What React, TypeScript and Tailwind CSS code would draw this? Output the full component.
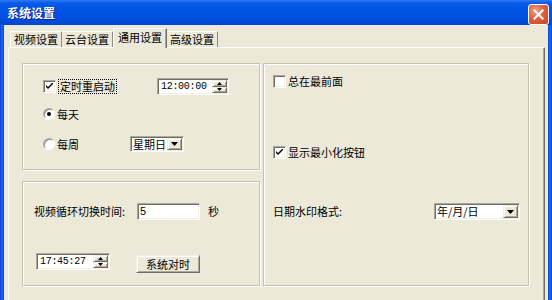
import React from "react";

const SUNKEN =
  "border border-t-[#ACA899] border-l-[#ACA899] border-b-white border-r-white shadow-[inset_1px_1px_0_#716F64,inset_-1px_-1px_0_#F1EFE2] bg-white";
const RAISED =
  "border border-t-[#F1EFE2] border-l-[#F1EFE2] border-r-[#716F64] border-b-[#716F64] shadow-[inset_1px_1px_0_white,inset_-1px_-1px_0_#ACA899] bg-[#ECE9D8]";
const GROUP =
  "border border-[#C5C2B2] shadow-[inset_1px_1px_0_white,1px_1px_0_white]";
const MONO = "font-['Liberation_Mono',monospace] text-[10px] tracking-[-0.3px]";

function Check({ checked }: { checked?: boolean }) {
  return (
    <div className={`${SUNKEN} w-[13px] h-[13px] shrink-0 flex items-center justify-center`}>
      {checked && (
        <svg width="7" height="7" viewBox="0 0 7 7">
          <path d="M0 2 L0 4 L2 6 L7 1 L7 -1 L2 4 Z" fill="#000" />
        </svg>
      )}
    </div>
  );
}

function Radio({ checked }: { checked?: boolean }) {
  return (
    <div className="w-[12px] h-[12px] shrink-0 rounded-full bg-white border border-t-[#ACA899] border-l-[#ACA899] border-b-white border-r-white shadow-[inset_1px_1px_0_#8E8C80] flex items-center justify-center">
      {checked && <div className="w-[4px] h-[4px] rounded-full bg-black" />}
    </div>
  );
}

function Arrow({ dir }: { dir: "up" | "down" }) {
  return (
    <svg width="5" height="3" viewBox="0 0 5 3">
      {dir === "up" ? (
        <path d="M2.5 0 L5 3 L0 3 Z" fill="#000" />
      ) : (
        <path d="M0 0 L5 0 L2.5 3 Z" fill="#000" />
      )}
    </svg>
  );
}

function TimeField({ value, w }: { value: string; w: string }) {
  return (
    <div className={`${SUNKEN} ${w} h-[17px] flex items-stretch p-[1px]`}>
      <div className={`flex-1 flex items-center pl-[2px] ${MONO} text-black`}>{value}</div>
      <div className="w-[15px] flex flex-col">
        <div className={`${RAISED} flex-1 flex items-center justify-center`}>
          <Arrow dir="up" />
        </div>
        <div className={`${RAISED} flex-1 flex items-center justify-center`}>
          <Arrow dir="down" />
        </div>
      </div>
    </div>
  );
}

function Combo({ value, w, h }: { value: string; w: string; h: string }) {
  return (
    <div className={`${SUNKEN} ${w} ${h} flex items-stretch p-[1px]`}>
      <div className="flex-1 flex items-center pl-[1px] leading-none">{value}</div>
      <div className={`${RAISED} w-[15px] flex items-center justify-center`}>
        <svg width="7" height="4" viewBox="0 0 7 4">
          <path d="M0 0 L7 0 L3.5 4 Z" fill="#000" />
        </svg>
      </div>
    </div>
  );
}

export default function App() {
  return (
    <div className="w-[552px] h-[300px] overflow-hidden flex flex-col font-['Noto_Sans_CJK_SC','Noto_Sans',sans-serif] text-[11px] text-black leading-none">
      {/* Title bar */}
      <div className="h-[25px] shrink-0 flex items-center justify-between pl-[7px] pr-[3px] bg-[linear-gradient(to_bottom,#2E7BF2_0%,#0A5AEA_12%,#0055E5_30%,#0050E0_70%,#0046D2_100%)]">
        <span className="text-white font-bold text-[12px] [text-shadow:1px_1px_0_#0A1E8C]">系统设置</span>
        <div className="w-[21px] h-[21px] mt-[4px] rounded-[3px] border border-white bg-[radial-gradient(circle_at_35%_30%,#F0A08A_0%,#E0603F_45%,#C8431E_100%)] flex items-center justify-center">
          <svg width="11" height="11" viewBox="0 0 11 11">
            <path d="M1.5 1.5 L9.5 9.5 M9.5 1.5 L1.5 9.5" stroke="#fff" strokeWidth="2" strokeLinecap="square" />
          </svg>
        </div>
      </div>

      <div className="flex-1 flex">
        <div className="w-[4px] bg-[linear-gradient(to_right,#0831D9,#166AEE,#0E5BE8,#0F4BCE)]" />
        <div className="flex-1 bg-[#ECE9D8] pl-[4px] pr-[3px] pt-[3px] flex flex-col">
          {/* Tabs */}
          <div className="h-[19px] flex items-end pl-[2px] relative z-10">
            <div className="w-[52px] h-[16px] border-l border-t border-l-white border-t-white border-r border-r-[#8E8C80] flex items-center justify-center">
              视频设置
            </div>
            <div className="w-[51px] h-[16px] border-t border-t-white border-r border-r-[#8E8C80] flex items-center justify-center">
              云台设置
            </div>
            <div className="w-[54px] h-[20px] -mb-[1px] bg-[#ECE9D8] border-l border-t border-l-white border-t-white border-r border-r-[#716F64] shadow-[inset_-1px_0_0_#ACA899] flex items-start justify-center pt-[3px]">
              通用设置
            </div>
            <div className="w-[51px] h-[16px] border-t border-t-white border-r border-r-[#8E8C80] flex items-center justify-center">
              高级设置
            </div>
          </div>

          {/* Tab panel */}
          <div className="flex-1 border-l border-t border-l-white border-t-white border-r border-r-[#716F64] shadow-[inset_-1px_0_0_#ACA899] pl-[13px] pt-[15px]">
            <div className="flex gap-x-[3px]">
              <div className="w-[238px] flex flex-col gap-[11px]">
                {/* Box 1 */}
                <div className={`${GROUP} h-[107px] pt-[14px] pl-[20px]`}>
                  <div className="h-[17px] flex items-center">
                    <div className="w-[114px] flex items-center">
                      <Check checked />
                      <span className="ml-[2px] border border-dotted border-black px-[1px] py-[1px]">定时重启动</span>
                    </div>
                    <TimeField value="12:00:00" w="w-[72px]" />
                  </div>
                  <div className="mt-[12px] h-[14px] flex items-center">
                    <Radio checked />
                    <span className="ml-[2px]">每天</span>
                  </div>
                  <div className="mt-[15px] h-[16px] flex items-center">
                    <div className="w-[87px] flex items-center">
                      <Radio />
                      <span className="ml-[2px]">每周</span>
                    </div>
                    <Combo value="星期日" w="w-[54px]" h="h-[16px]" />
                  </div>
                </div>
                {/* Box 2 */}
                <div className={`${GROUP} h-[105px] pt-[21px] pl-[11px]`}>
                  <div className="h-[17px] flex items-center">
                    <span className="w-[103px]">视频循环切换时间:</span>
                    <div className={`${SUNKEN} w-[63px] h-[17px] flex items-center pl-[2px] font-['Liberation_Sans',sans-serif] text-[11px]`}>
                      5
                    </div>
                    <span className="ml-[8px]">秒</span>
                  </div>
                  <div className="mt-[33px] h-[19px] flex items-start">
                    <div className="ml-[2px]">
                      <TimeField value="17:45:27" w="w-[74px]" />
                    </div>
                    <div className={`${RAISED} ml-[26px] mt-[2px] w-[64px] h-[18px] flex items-center justify-center`}>
                      系统对时
                    </div>
                  </div>
                </div>
              </div>

              {/* Right box */}
              <div className={`${GROUP} w-[266px] h-[223px] pt-[11px] pl-[9px]`}>
                <div className="h-[13px] flex items-center">
                  <Check />
                  <span className="ml-[2px]">总在最前面</span>
                </div>
                <div className="mt-[58px] h-[13px] flex items-center">
                  <Check checked />
                  <span className="ml-[2px]">显示最小化按钮</span>
                </div>
                <div className="mt-[44px] h-[17px] flex items-center">
                  <span className="w-[161px]">日期水印格式:</span>
                  <Combo value="年/月/日" w="w-[86px]" h="h-[17px]" />
                </div>
              </div>
            </div>
          </div>
        </div>
        <div className="w-[4px] bg-[linear-gradient(to_right,#0F4BCE,#0E5BE8,#166AEE,#0831D9)]" />
      </div>
    </div>
  );
}
